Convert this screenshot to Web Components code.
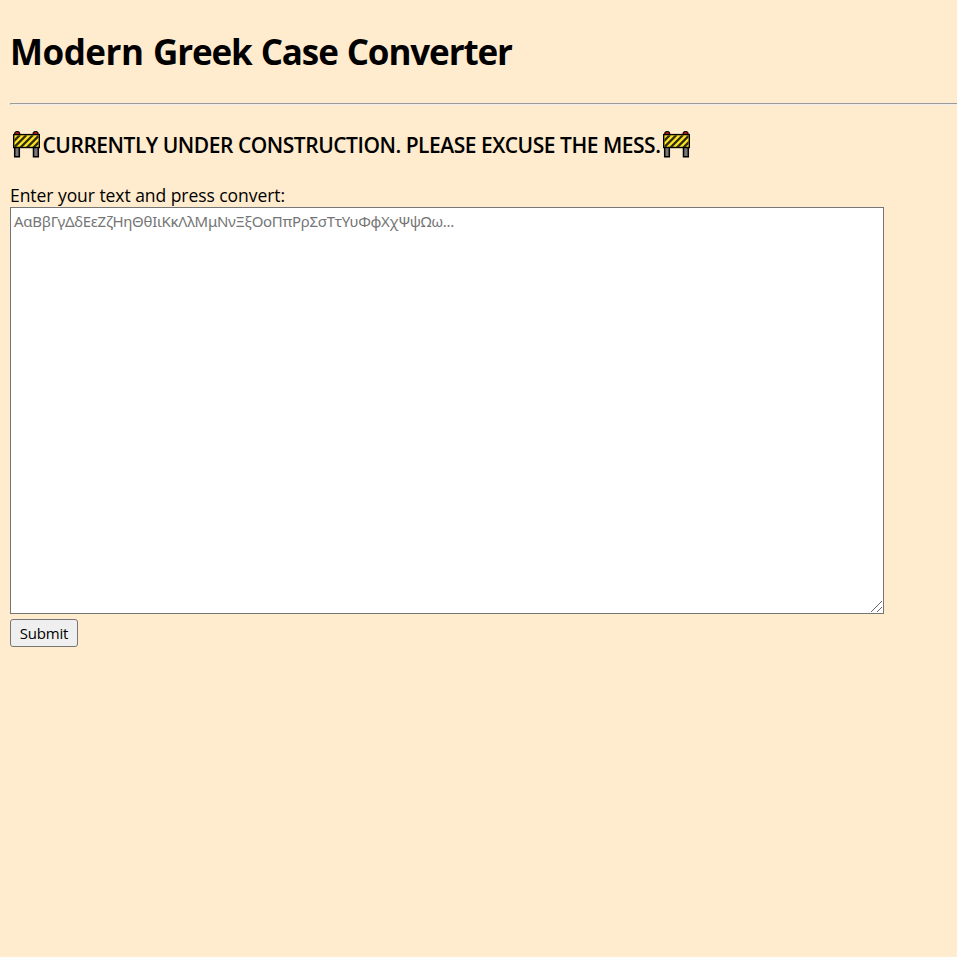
<!DOCTYPE html>
<html lang="en"><head><meta charset="utf-8"><title>Modern Greek Case Converter</title>
<style>html,body{margin:0;background:#ffebcd}body{height:957px;overflow:hidden}</style></head>
<body>
<case-converter></case-converter>
<script>
customElements.define('barricade-icon', class extends HTMLElement {
  connectedCallback() {
    this.attachShadow({mode: 'open'}).innerHTML = `
<style>:host{display:block;width:28px;height:28px;flex:none}svg{display:block}</style>
<svg width="28" height="28" viewBox="0 0 28 28">
<defs><clipPath id="b"><rect x="1.4" y="4.2" width="24.2" height="11.9"/></clipPath></defs>
<circle cx="4.2" cy="3.1" r="3.2" fill="#100c08"/><circle cx="22.6" cy="3.1" r="3.2" fill="#100c08"/>
<circle cx="4.2" cy="3" r="1.9" fill="#c01421"/><circle cx="22.6" cy="3" r="1.9" fill="#c01421"/>
<path d="M1.7 16h4.6v9.7H1.7zM20.5 16h4.8v9.7h-4.8z" fill="#777" stroke="#000" stroke-width="1.5"/>
<rect x=".7" y="3.6" width="25.6" height="12.9" fill="#fce51c" stroke="#000" stroke-width="1.4"/>
<path clip-path="url(#b)" d="M-7 18L7 4M-.5 18L13.5 4M6 18L20 4M12.5 18L26.5 4M19 18L33 4" stroke="#302b1c" stroke-width="2.3"/>
</svg>`;
  }
});
customElements.define('construction-notice', class extends HTMLElement {
  connectedCallback() {
    this.attachShadow({mode: 'open'}).innerHTML = `
<style>:host{display:block}h2{display:flex;align-items:center;margin:0;height:28px;padding-left:3px;font-size:21px;font-weight:600;line-height:28px;white-space:nowrap}
span{margin-left:1.5px;width:620.5px;letter-spacing:-.48px}</style>
<h2><barricade-icon></barricade-icon><span><slot></slot></span><barricade-icon></barricade-icon></h2>`;
  }
});
customElements.define('convert-form', class extends HTMLElement {
  connectedCallback() {
    this.attachShadow({mode: 'open'}).innerHTML = `
<style>:host{display:block}form{display:flex;flex-direction:column;align-items:flex-start}
label{font-size:17.5px;line-height:24px;letter-spacing:-.05px}
.field{position:relative;height:407px;margin-bottom:5px}
.grip{position:absolute;right:2px;bottom:2px;pointer-events:none}
textarea{display:block;box-sizing:border-box;width:874px;height:407px;margin:0;padding:1px 3px;resize:none;border:1px solid #767676;border-radius:0;background:#fff;font:15px/24px "Noto Sans",sans-serif;letter-spacing:-.3px}
textarea::placeholder{color:#757575}
button{box-sizing:border-box;width:68px;height:28px;padding:0;border:1px solid #767676;border-radius:3px;background:#efefef;color:#000;font:15px/26px "Open Sans",sans-serif;letter-spacing:-.2px}</style>
<form><label for="t">Enter your text and press convert:</label>
<div class="field"><textarea id="t" placeholder="ΑαΒβΓγΔδΕεΖζΗηΘθΙιΚκΛλΜμΝνΞξΟοΠπΡρΣσΤτΥυΦφΧχΨψΩω..."></textarea>
<svg class="grip" width="11" height="11" viewBox="0 0 11 11"><path d="M0 11L11 0M6 11L11 6" stroke="#666" stroke-width="1"/></svg></div>
<button type="button">Submit</button></form>`;
  }
});
customElements.define('case-converter', class extends HTMLElement {
  connectedCallback() {
    this.attachShadow({mode: 'open'}).innerHTML = `
<style>:host{display:block;padding:28px 0 0 10px;font-family:"Open Sans",sans-serif;color:#000}
h1{margin:0 0 27px;font-size:35px;line-height:48px;font-weight:700;letter-spacing:-.98px;word-spacing:1px;white-space:nowrap}
h1 .wide{letter-spacing:-.5px}
hr{box-sizing:border-box;height:2px;margin:0 -10px 26px 0;border:solid;border-width:1px 0 1px 1px;border-color:#9a9a9a #eee #eee #9a9a9a}
construction-notice{margin-bottom:24px}</style>
<h1><span class="wide">Modern </span>Greek Case Converter</h1><hr>
<construction-notice>CURRENTLY UNDER CONSTRUCTION. PLEASE EXCUSE THE MESS.</construction-notice>
<convert-form></convert-form>`;
    this.shadowRoot.querySelector('h1').style.letterSpacing = '-1.12px';
  }
});
</script></body></html>
